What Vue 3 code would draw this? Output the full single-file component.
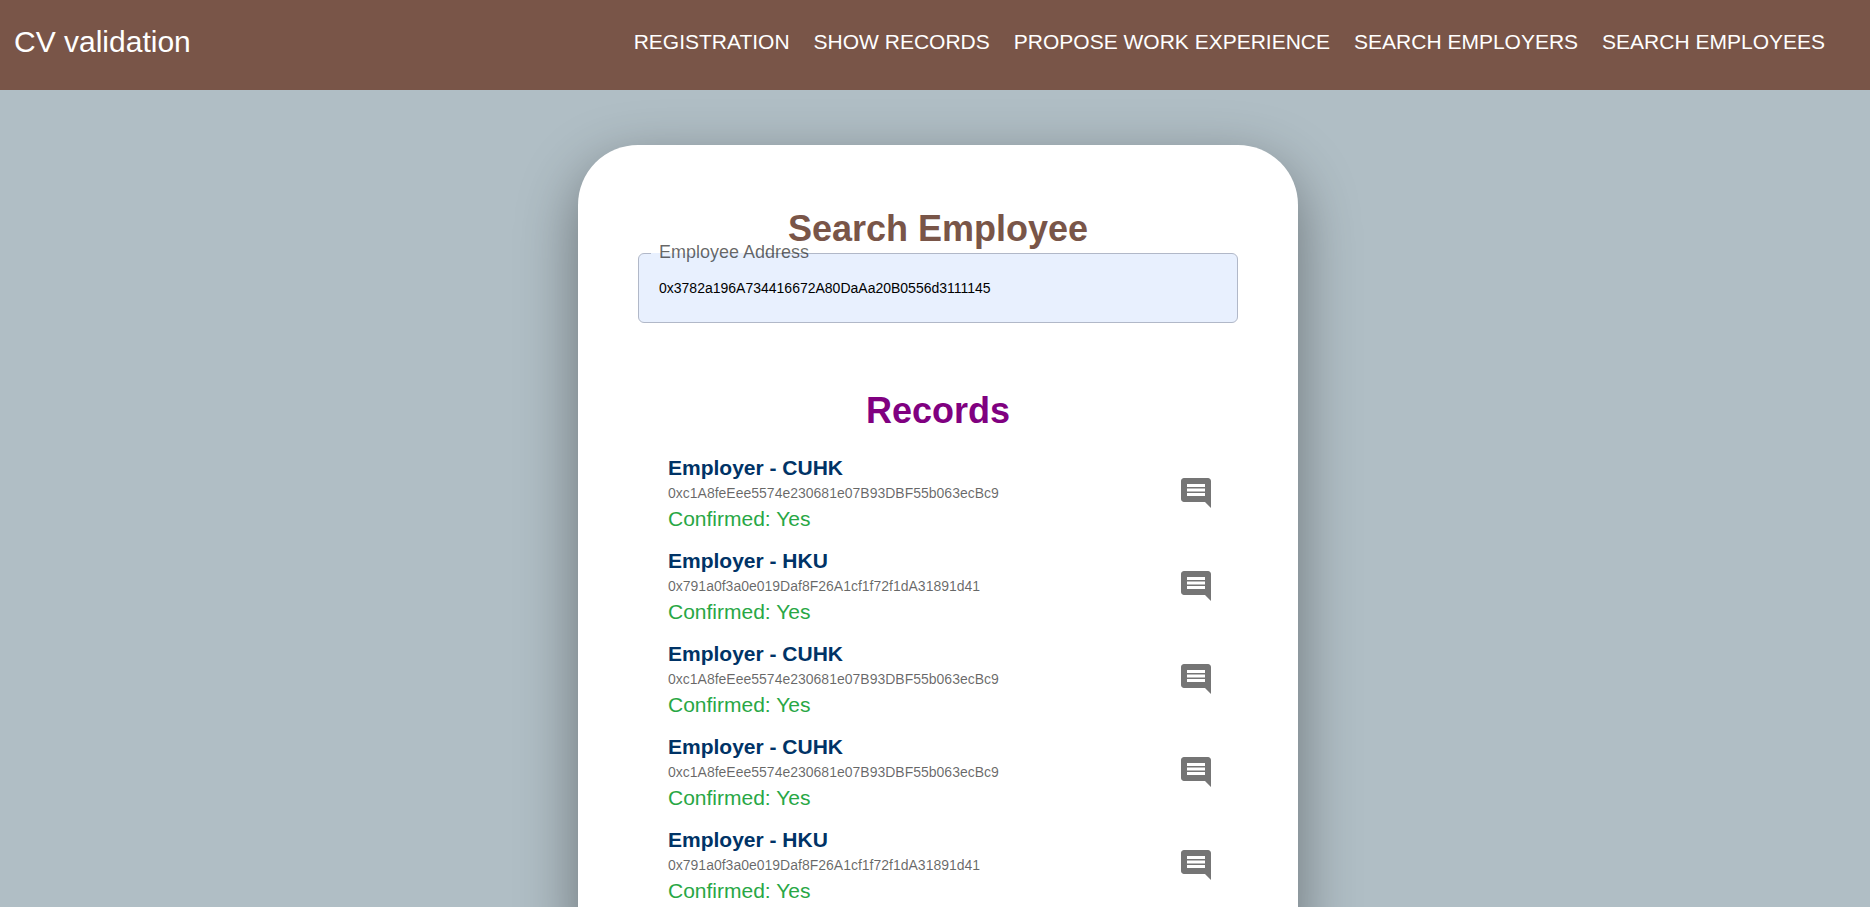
<script setup>
const links = ['Registration', 'Show Records', 'Propose Work Experience', 'Search Employers', 'Search Employees']

const cuhk = { name: 'CUHK', address: '0xc1A8feEee5574e230681e07B93DBF55b063ecBc9' }
const hku = { name: 'HKU', address: '0x791a0f3a0e019Daf8F26A1cf1f72f1dA31891d41' }
const records = [cuhk, hku, cuhk, cuhk, hku]
</script>

<template>
  <div class="page">
    <header class="bar">
      <a class="brand" href="#">CV validation</a>
      <nav class="nav">
        <a v-for="link in links" :key="link" href="#">{{ link }}</a>
      </nav>
    </header>
    <main class="content">
      <section class="card">
        <h1 class="title">Search Employee</h1>
        <div class="field">
          <label for="address">Employee Address</label>
          <input id="address" type="text" value="0x3782a196A734416672A80DaAa20B0556d3111145" />
        </div>
        <h2 class="title records-title">Records</h2>
        <ul class="records">
          <li v-for="(record, i) in records" :key="i" class="record">
            <div class="details">
              <h3>Employer - {{ record.name }}</h3>
              <p class="hash">{{ record.address }}</p>
              <p class="status">Confirmed: Yes</p>
            </div>
            <button type="button" class="comment" aria-label="Show comment">
              <svg viewBox="0 0 24 24" aria-hidden="true">
                <path d="M21.99 4c0-1.1-.89-2-1.99-2H4c-1.1 0-2 .9-2 2v12c0 1.1.9 2 2 2h14l4 4-.01-18zM18 14H6v-2h12v2zm0-3H6V9h12v2zm0-3H6V6h12v2z" />
              </svg>
            </button>
          </li>
        </ul>
      </section>
    </main>
  </div>
</template>

<style>
html {
  background: #b0bec5;
  scrollbar-width: none;
}
</style>

<style scoped>
.page {
  font-family: Arial, "Liberation Sans", sans-serif;
}
.bar {
  display: flex;
  justify-content: space-between;
  align-items: center;
  box-sizing: border-box;
  min-height: 90px;
  padding: 0 45px 6px 14px;
  background: #795548;
}
.bar a {
  color: #fff;
  text-decoration: none;
}
.brand {
  font-size: 30px;
}
.nav {
  display: flex;
  gap: 24px;
  font-size: 21px;
  text-transform: uppercase;
}
.content {
  display: flex;
  justify-content: center;
  padding: 55px 0 55px 6px;
}
.card {
  box-sizing: border-box;
  width: 720px;
  max-width: 100%;
  padding: 60px;
  border-radius: 60px;
  background: #fff;
  box-shadow: 0 20px 60px rgba(0, 0, 0, 0.4);
}
.title {
  margin: 0;
  font-size: 36px;
  line-height: 48px;
  text-align: center;
  color: #795548;
}
.records-title {
  margin: 64px 0 13px;
  color: purple;
}
.field {
  position: relative;
}
/* gap in the outline where the label starts */
.field::before {
  content: "";
  position: absolute;
  top: 0;
  left: 13px;
  width: 114px;
  height: 1px;
  background: #e8f0fe;
}
.field label {
  position: absolute;
  top: -12px;
  left: 21px;
  font-size: 18px;
  line-height: 22px;
  color: rgba(0, 0, 0, 0.6);
}
.field input {
  display: block;
  box-sizing: border-box;
  width: 100%;
  height: 70px;
  padding: 0 20px;
  border: 1px solid #b1b8c8;
  border-radius: 6px;
  background: #e8f0fe;
  font: 14px Arial, "Liberation Sans", sans-serif;
  color: #000;
}
.records {
  margin: 0;
  padding: 0 24px 0 30px;
  list-style: none;
}
.record {
  display: flex;
  justify-content: space-between;
  align-items: center;
  padding: 6px 0 9px;
}
.record h3,
.record p {
  margin: 0;
}
.record h3 {
  font-size: 21px;
  line-height: 28px;
  color: #003366;
}
.record .hash {
  font-size: 14px;
  line-height: 23px;
  color: rgba(0, 0, 0, 0.6);
}
.record .status {
  font-size: 21px;
  line-height: 27px;
  color: #28a745;
}
.comment {
  padding: 0;
  border: 0;
  background: none;
}
.comment svg {
  display: block;
  width: 36px;
  height: 36px;
  fill: #757575;
}
</style>
